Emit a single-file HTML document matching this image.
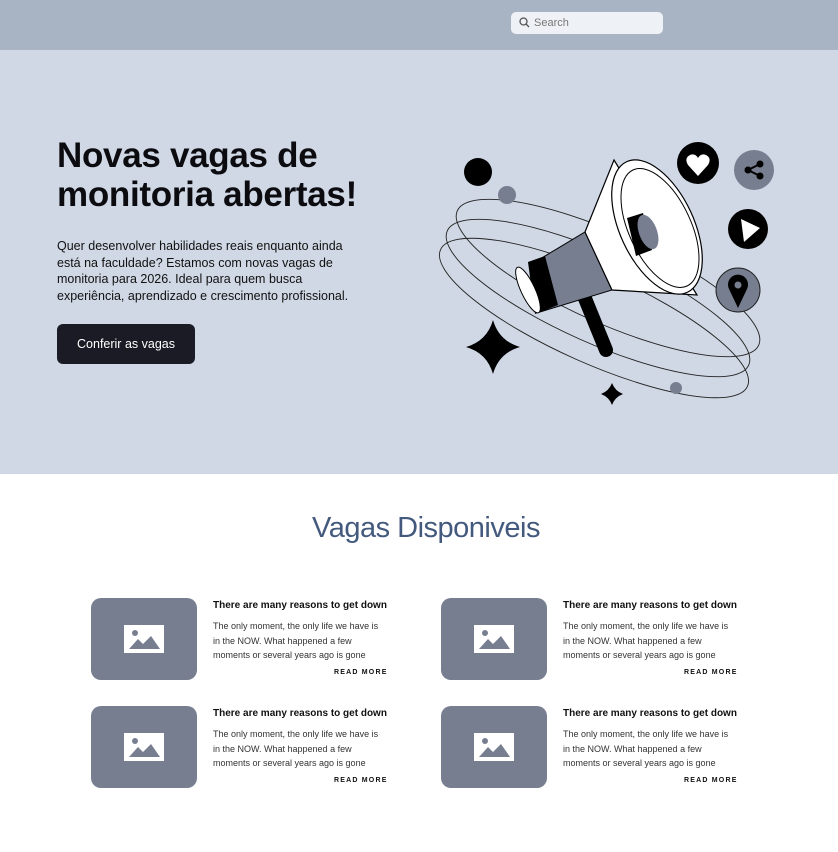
<!DOCTYPE html>
<html><head><meta charset="utf-8"><style>
*{margin:0;padding:0;box-sizing:border-box}
body{width:838px;height:852px;background:#fff;font-family:"Liberation Sans",sans-serif;position:relative;overflow:hidden}
.hdr{position:absolute;left:0;top:0;width:838px;height:50px;background:#a8b4c4}
.search{position:absolute;left:511px;top:12px;width:152px;height:22px;background:#eef1f5;border-radius:5px;font-size:11px;color:#777;padding:5px 0 0 23px}
.hero{position:absolute;left:0;top:50px;width:838px;height:424px;background:#cfd8e4}
h1{position:absolute;left:57px;top:136px;font-size:35px;line-height:39px;font-weight:bold;color:#0c0c10;letter-spacing:-0.3px}
.p{position:absolute;left:57px;top:238px;width:300px;font-size:12.5px;line-height:16.5px;color:#111}
.btn{position:absolute;left:57px;top:324px;width:138px;height:40px;background:#1b1b26;border-radius:6px;color:#fff;font-size:12.5px;text-align:center;line-height:40px}
h2{position:absolute;left:0;width:852px;top:512px;text-align:center;font-size:29px;font-weight:normal;color:#435a7e;letter-spacing:-0.5px}
.img{position:absolute;width:106px;height:82px;background:#777e90;border-radius:10px}
.img svg{position:absolute;left:33px;top:27px}
.t{position:absolute;width:180px;font-size:10px;font-weight:bold;color:#111}
.d{position:absolute;width:172px;font-size:9px;line-height:14.5px;color:#333}
.r{position:absolute;font-size:7px;font-weight:bold;letter-spacing:1.2px;color:#111}
</style></head><body>
<div class="hdr"><div class="search">Search</div>
<svg style="position:absolute;left:519px;top:17px" width="11" height="11" viewBox="0 0 11 11"><circle cx="4.5" cy="4.5" r="3.5" fill="none" stroke="#555" stroke-width="1.3"/><line x1="7" y1="7" x2="10" y2="10" stroke="#555" stroke-width="1.3"/></svg></div>
<div class="hero"></div>
<h1>Novas vagas de<br>monitoria abertas!</h1>
<div class="p">Quer desenvolver habilidades reais enquanto ainda está na faculdade? Estamos com novas vagas de monitoria para 2026. Ideal para quem busca experiência, aprendizado e crescimento profissional.</div>
<div class="btn">Conferir as vagas</div>
<svg style="position:absolute;left:0;top:0" width="838" height="474" viewBox="0 0 838 474">
<g fill="none" stroke="#222" stroke-width="0.9">
<ellipse cx="608" cy="278" rx="165" ry="45" transform="rotate(24 608 278)"/>
<ellipse cx="598" cy="298" rx="165" ry="45" transform="rotate(24 598 298)"/>
<ellipse cx="594" cy="318" rx="168" ry="45" transform="rotate(24 594 318)"/>
</g>
<circle cx="478" cy="172" r="14" fill="#000"/>
<circle cx="507" cy="195" r="9" fill="#777e90"/>
<circle cx="676" cy="388" r="6" fill="#777e90"/>
<path d="M493 320 Q499 341 520 347 Q499 353 493 374 Q487 353 466 347 Q487 341 493 320Z" fill="#000"/>
<path d="M612 383 Q615 391 623 394 Q615 397 612 405 Q609 397 601 394 Q609 391 612 383Z" fill="#000"/>
<line x1="584" y1="296" x2="606" y2="350" stroke="#000" stroke-width="14" stroke-linecap="round"/>
<path d="M530 265 L585 232 L612 290 L540 312 Z" fill="#777e90" stroke="#000" stroke-width="1"/>
<path d="M528 262 L545 256 L558 305 L535 314 Z" fill="#000"/>
<ellipse cx="528" cy="290" rx="7" ry="25" transform="rotate(-25 528 290)" fill="#fff" stroke="#000"/>
<path d="M614 160 L585 232 L612 290 L697 295 Z" fill="#fff" stroke="#000" stroke-width="1.2"/>
<ellipse cx="657" cy="227" rx="37" ry="72" transform="rotate(-25 657 227)" fill="#fff" stroke="#000" stroke-width="1.2"/>
<ellipse cx="660" cy="228" rx="31" ry="64" transform="rotate(-25 660 228)" fill="none" stroke="#000" stroke-width="1"/>
<path d="M627 218 L643 213 L652 250 L636 256 Z" fill="#000"/>
<ellipse cx="648" cy="232" rx="9" ry="18" transform="rotate(-20 648 232)" fill="#777e90"/>
<circle cx="698" cy="163" r="21" fill="#000"/>
<path d="M698 176 L688 165 Q684 158 690 155 Q695 153 698 158 Q701 153 706 155 Q712 158 708 165 Z" fill="#fff"/>
<circle cx="754" cy="170" r="20" fill="#777e90"/>
<g fill="#000"><circle cx="760" cy="164" r="3.5"/><circle cx="760" cy="176" r="3.5"/><circle cx="748" cy="170" r="3.5"/></g>
<path d="M760 164 L748 170 L760 176" stroke="#000" stroke-width="2" fill="none"/>
<circle cx="748" cy="229" r="20" fill="#000"/>
<path d="M741 219 L760 228 L744 242 Z" fill="#fff"/>
<circle cx="738" cy="290" r="22" fill="#777e90" stroke="#222" stroke-width="1"/>
<path d="M738 308 L729 289 A10 10 0 1 1 747 289 Z" fill="#000"/>
<circle cx="738" cy="285" r="3.5" fill="#777e90"/>
</svg>
<h2>Vagas Disponiveis</h2>
<div class="img" style="left:91px;top:598px"><svg width="40" height="28"><rect width="40" height="28" fill="#fff"/><circle cx="11" cy="8" r="3" fill="#777e90"/><path d="M5 24 L14 14 L19 19 L27 11 L36 24Z" fill="#777e90"/></svg></div>
<div class="t" style="left:213px;top:600px">There are many reasons to get down</div>
<div class="d" style="left:213px;top:619px">The only moment, the only life we have is in the NOW. What happened a few moments or several years ago is gone</div>
<div class="r" style="left:334px;top:669px">READ MORE</div>
<div class="img" style="left:441px;top:598px"><svg width="40" height="28"><rect width="40" height="28" fill="#fff"/><circle cx="11" cy="8" r="3" fill="#777e90"/><path d="M5 24 L14 14 L19 19 L27 11 L36 24Z" fill="#777e90"/></svg></div>
<div class="t" style="left:563px;top:600px">There are many reasons to get down</div>
<div class="d" style="left:563px;top:619px">The only moment, the only life we have is in the NOW. What happened a few moments or several years ago is gone</div>
<div class="r" style="left:684px;top:669px">READ MORE</div>
<div class="img" style="left:91px;top:706px"><svg width="40" height="28"><rect width="40" height="28" fill="#fff"/><circle cx="11" cy="8" r="3" fill="#777e90"/><path d="M5 24 L14 14 L19 19 L27 11 L36 24Z" fill="#777e90"/></svg></div>
<div class="t" style="left:213px;top:708px">There are many reasons to get down</div>
<div class="d" style="left:213px;top:727px">The only moment, the only life we have is in the NOW. What happened a few moments or several years ago is gone</div>
<div class="r" style="left:334px;top:777px">READ MORE</div>
<div class="img" style="left:441px;top:706px"><svg width="40" height="28"><rect width="40" height="28" fill="#fff"/><circle cx="11" cy="8" r="3" fill="#777e90"/><path d="M5 24 L14 14 L19 19 L27 11 L36 24Z" fill="#777e90"/></svg></div>
<div class="t" style="left:563px;top:708px">There are many reasons to get down</div>
<div class="d" style="left:563px;top:727px">The only moment, the only life we have is in the NOW. What happened a few moments or several years ago is gone</div>
<div class="r" style="left:684px;top:777px">READ MORE</div>
</body></html>
